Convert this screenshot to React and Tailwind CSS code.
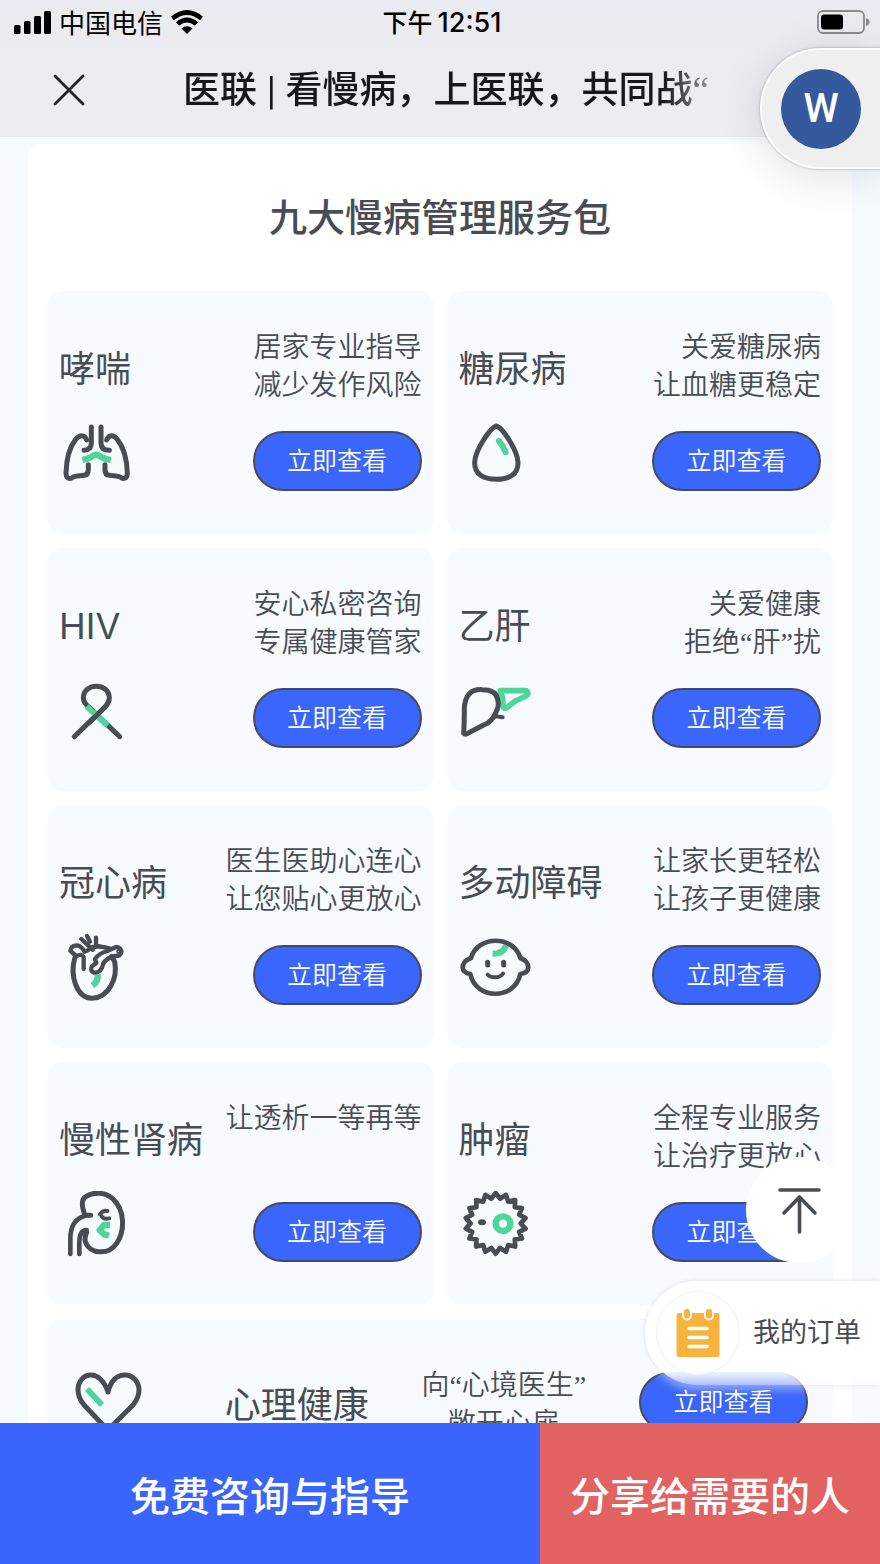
import React from "react";

const INK = "#484c54";
const GREEN = "#4fd49a";

function Icon({ viewBox, children }) {
  return (
    <svg
      viewBox={viewBox}
      className="size-[72px] shrink-0"
      fill="none"
      stroke={INK}
      strokeWidth="15"
      strokeLinecap="round"
      strokeLinejoin="round"
      aria-hidden="true"
    >
      {children}
    </svg>
  );
}

const LungsIcon = () => (
  <Icon viewBox="57 30 216 216">
    <path d="M154 51V100Q154 120 132 121" />
    <path d="M183 51V100Q184 121 208 121" />
    <path d="M140 90C134 72 118 74 107 88C88 112 79 150 78 190Q78 207 93 205Q100 199 112 198L132 196Q145 195 145 180V164" />
    <path d="M200 90C206 72 222 74 232 88C251 112 261 150 262 190Q262 207 247 205Q240 199 228 198L208 196Q195 195 195 180V164" />
    <path d="M127 150Q152 144 160 137Q169 131 178 137Q188 145 213 150" stroke={GREEN} strokeWidth="19" strokeLinecap="butt" />
  </Icon>
);

const DropIcon = () => (
  <Icon viewBox="26 30 216 216">
    <path d="M138 48C120 52 74 122 73 157C72 193 100 208 138 208C177 208 204 193 203 157C202 122 156 52 138 48Z" />
    <path d="M146 93Q158 107 166 127" stroke={GREEN} strokeWidth="18" />
  </Icon>
);

const RibbonIcon = () => (
  <Icon viewBox="57 21 216 216">
    <path d="M239 197L145 107Q130 94 130 80C132 34 206 34 208 80Q208 94 196 107L103 197" />
    <path d="M140 106L203 164" stroke={GREEN} strokeWidth="18" strokeLinecap="butt" />
    <path d="M196 107L150 153" />
  </Icon>
);

const LiverIcon = () => (
  <Icon viewBox="26 21 216 216">
    <path d="M150 62H228Q238 70 228 77Q210 86 195 93L169 113Q160 118 158 108L157 84Z" stroke={GREEN} strokeWidth="17" />
    <path d="M142 88Q138 59 96 59Q44 56 42 116Q42 160 40 190Q46 196 58 187L100 165Q128 153 136 128Q148 108 142 88Z" />
    <path d="M130 138L157 142" strokeWidth="12" />
  </Icon>
);

const HeartOrganIcon = () => (
  <Icon viewBox="57 27 216 216">
    <path d="M173 148Q176 169 157 182" stroke={GREEN} strokeWidth="19" strokeLinecap="butt" />
    <path d="M104 100C90 150 108 218 156 220C206 218 234 160 224 110L215 94" />
    <path d="M131 132V96Q124 84 109 94L91 77Q93 62 110 61Q124 62 134 80" strokeWidth="13" />
    <path d="M124 42L158 74M141 33L150 50M168 38V62L208 70Q184 62 158 66L140 78" strokeWidth="13" />
    <path d="M228 66Q246 68 244 82Q241 93 227 93Q200 96 189 118Q184 144 162 143Q149 138 156 124L169 114L165 102Q178 84 202 78L228 66Z" strokeWidth="13" />
    <circle cx="235" cy="79" r="4" strokeWidth="5" />
  </Icon>
);

const BabyIcon = () => (
  <Icon viewBox="26 27 216 216">
    <path d="M127 86Q160 87 167 60" stroke={GREEN} strokeWidth="18" strokeLinecap="butt" />
    <path d="M62 99C82 30 190 30 210 99Q234 108 234 128Q233 144 210 147C194 226 76 226 60 147Q38 144 37 128Q37 108 62 99Z" strokeWidth="14" />
    <path d="M112 112V120M160 112V120" strokeWidth="15" />
    <path d="M112 149Q118 157 135 157Q150 157 158 146" strokeWidth="12" />
  </Icon>
);

const KidneyIcon = () => (
  <Icon viewBox="57 33 216 216">
    <path d="M152 106H135Q118 60 137 50C162 34 198 36 220 58C254 90 256 152 230 190C204 228 150 220 138 190Q131 176 140 157" />
    <path d="M137 107Q91 118 91 176V222M118 222V188Q118 150 140 150" strokeWidth="14" />
    <path d="M202 93Q190 89 180 103M185 109Q192 119 208 115" strokeWidth="12" />
    <path d="M210 135H192L179 150L192 163L207 167" stroke={GREEN} strokeWidth="19" strokeLinecap="butt" />
  </Icon>
);

const SPIKES = 18;
const cellOutline =
  Array.from({ length: SPIKES * 2 }, (_, i) => {
    const radius = i % 2 === 0 ? 91 : 75;
    const angle = (Math.PI * i) / SPIKES - Math.PI / 2;
    const x = 136 + radius * Math.cos(angle);
    const y = 130 + radius * Math.sin(angle);
    return `${i ? "L" : "M"}${x.toFixed(1)} ${y.toFixed(1)}`;
  }).join("") + "Z";

const TumorIcon = () => (
  <Icon viewBox="26 33 216 216">
    <path d={cellOutline} strokeWidth="14" />
    <ellipse cx="95" cy="127" rx="12" ry="9" fill={INK} stroke="none" />
    <circle cx="158" cy="131" r="22" stroke={GREEN} strokeWidth="19" />
  </Icon>
);

const MindIcon = () => (
  <Icon viewBox="73 1366 72 72">
    <path
      d="M109 1392C105 1380 98 1375 92 1375C84 1375 79 1382 79 1390C79 1396 81 1400 85 1405L106 1427Q109 1430 112 1427L134 1405C138 1400 140 1396 140 1390C140 1382 134 1375 126 1375C118 1375 112 1380 109 1392Z"
      strokeWidth="5"
    />
    <path d="M88 1389L103 1405" stroke={GREEN} strokeWidth="6" strokeLinecap="butt" />
  </Icon>
);

const services = [
  { name: "哮喘", lines: ["居家专业指导", "减少发作风险"], icon: LungsIcon },
  { name: "糖尿病", lines: ["关爱糖尿病", "让血糖更稳定"], icon: DropIcon },
  { name: "HIV", lines: ["安心私密咨询", "专属健康管家"], icon: RibbonIcon },
  { name: "乙肝", lines: ["关爱健康", "拒绝“肝”扰"], icon: LiverIcon },
  { name: "冠心病", lines: ["医生医助心连心", "让您贴心更放心"], icon: HeartOrganIcon },
  { name: "多动障碍", lines: ["让家长更轻松", "让孩子更健康"], icon: BabyIcon },
  { name: "慢性肾病", lines: ["让透析一等再等"], icon: KidneyIcon },
  { name: "肿瘤", lines: ["全程专业服务", "让治疗更放心"], icon: TumorIcon },
];

/* Sets curly quotes and Latin runs in proportional faces inside Chinese text. */
function Mixed({ text }) {
  return text.split(/([“”]|[A-Za-z]+)/).map((part, i) => {
    if (/^[“”]$/.test(part)) {
      return (
        <span key={i} className="font-['Liberation_Serif',serif] leading-none">
          {part}
        </span>
      );
    }
    if (/^[A-Za-z]+$/.test(part)) {
      return (
        <span key={i} className="font-['Inter',sans-serif] leading-none">
          {part}
        </span>
      );
    }
    return part;
  });
}

function ViewButton({ name }) {
  return (
    <button
      type="button"
      aria-label={`立即查看 ${name}`}
      className="flex h-[60px] w-[169px] shrink-0 items-center justify-center rounded-full border-2 border-[#454a5e] bg-[#3a66fb] font-['Inter','Noto_Sans_CJK_SC',sans-serif] text-[25px] leading-[38px] font-[350] text-white"
    >
      立即查看
    </button>
  );
}

function ServiceCard({ name, lines, icon: Glyph }) {
  return (
    <li className="flex h-[243px] justify-between rounded-2xl bg-[#f7faff] px-3">
      <div className="pt-[55px]">
        <h3 className="text-[36px] leading-[40px] whitespace-nowrap">
          <Mixed text={name} />
        </h3>
        <div className="mt-[34px]">
          <Glyph />
        </div>
      </div>
      <div className="flex flex-col items-end pt-[35px]">
        <p className="mb-7 h-[77px] text-right text-[28px] leading-[38px] font-[350] whitespace-nowrap">
          {lines.map((line) => (
            <span key={line} className="block">
              <Mixed text={line} />
            </span>
          ))}
        </p>
        <ViewButton name={name} />
      </div>
    </li>
  );
}

function StatusBar() {
  return (
    <div className="grid h-11 grid-cols-3 items-center pr-[10px] pl-[14px] text-black">
      <div className="flex items-center gap-2">
        <svg viewBox="0 0 37 24" className="h-6 w-[37px]" fill="currentColor" aria-hidden="true">
          <rect x="0" y="15" width="6.500" height="9" rx="1.500" />
          <rect x="10" y="11" width="6.500" height="13" rx="1.500" />
          <rect x="20" y="6" width="7" height="18" rx="1.500" />
          <rect x="30" y="1" width="7" height="23" rx="1.500" />
        </svg>
        <span className="text-[26px] leading-[32px] whitespace-nowrap">中国电信</span>
        <svg viewBox="0 0 32 24" className="h-6 w-8" fill="none" stroke="currentColor" strokeWidth="4.600" aria-hidden="true">
          <path d="M1.500 8.500Q16 -3.500 30.500 8.500" />
          <path d="M6.500 14Q16 6 25.500 14" />
          <path d="M10.500 18.500Q16 14 21.500 18.500L16 24Z" fill="currentColor" stroke="none" />
        </svg>
      </div>
      <div className="flex items-baseline justify-center gap-[5px] font-medium">
        <span className="text-[25px] leading-[32px]">下午</span>
        <span className="font-['Inter',sans-serif] text-[27px] leading-[32px]">12:51</span>
      </div>
      <svg viewBox="0 0 53 24" className="h-6 w-[53px] justify-self-end" aria-hidden="true">
        <rect x="1" y="1" width="46" height="22" rx="5" fill="none" stroke="#8b8b8e" strokeWidth="1.800" />
        <rect x="4" y="4.500" width="22" height="15" rx="3" fill="#000" />
        <path d="M49 8Q52.500 9 52.500 12Q52.500 15 49 16Z" fill="#8b8b8e" />
      </svg>
    </div>
  );
}

export default function App() {
  return (
    <div className="relative flex h-screen flex-col overflow-hidden bg-[#f7faff] font-['Noto_Sans_CJK_SC',sans-serif] text-[#484c54]">
      <header className="shrink-0 border-b border-[#e4e6ea] bg-linear-to-b from-[#eaebf2] to-[#eeeeef]">
        <StatusBar />
        <div className="flex h-[92px] items-center pl-[53px]">
          <button type="button" aria-label="关闭" className="flex size-8 items-center justify-center">
            <svg viewBox="0 0 32 32" className="size-8" fill="none" stroke="#222" strokeWidth="2.800" strokeLinecap="round" aria-hidden="true">
              <path d="M2 2L30 30M30 2L2 30" />
            </svg>
          </button>
          <h1 className="ml-[98px] w-[550px] font-['Inter','Noto_Sans_CJK_SC',sans-serif] text-[37px] leading-[50px] font-medium whitespace-nowrap text-[#17181a] [mask-image:linear-gradient(to_right,black_480px,transparent_560px)]">
            医联<span className="mx-[2px] text-[28px] leading-none"> | </span>
            <Mixed text="看慢病，上医联，共同战“" />
          </h1>
        </div>
      </header>

      <main className="min-h-0 flex-1 overflow-y-auto px-7 pt-[7px] [scrollbar-width:none]">
        <section className="rounded-xl bg-white px-[19px] pt-12 pb-8">
          <h2 className="mb-[49px] text-center font-['Inter','Noto_Sans_CJK_SC',sans-serif] text-[38px] leading-[50px] font-medium">
            九大慢病管理服务包
          </h2>
          <ul className="grid grid-cols-2 gap-x-[13px] gap-y-[14px]">
            {services.map((service) => (
              <ServiceCard key={service.name} {...service} />
            ))}
          </ul>
          <div className="mt-[14px] flex h-[166px] items-center justify-between rounded-2xl bg-[#f7faff] px-[25px]">
            <MindIcon />
            <h3 className="ml-7 text-[36px] leading-[40px] whitespace-nowrap">心理健康</h3>
            <p className="text-center text-[28px] leading-[38px] font-[350] whitespace-nowrap">
              <span className="block">
                <Mixed text="向“心境医生”" />
              </span>
              <span className="block">敞开心扉</span>
            </p>
            <ViewButton name="心理健康" />
          </div>
        </section>
      </main>

      <footer className="grid h-[141px] shrink-0 grid-cols-[27fr_17fr] text-[40px] leading-[56px] font-medium text-white">
        <button type="button" className="bg-[#3a65fc] whitespace-nowrap">
          免费咨询与指导
        </button>
        <button type="button" className="bg-[#e26262] whitespace-nowrap">
          分享给需要的人
        </button>
      </footer>

      <button
        type="button"
        aria-label="W 文档"
        className="absolute top-12 right-0 flex h-[121px] w-[120px] items-center rounded-l-full border-2 border-r-0 border-white bg-[#efeff0] pl-[19px] shadow-[0_0_2px_1px_rgba(0,0,0,0.16),0_8px_48px_rgba(0,0,0,0.12)]"
      >
        <span className="flex size-20 items-center justify-center rounded-full bg-[#34599c] font-['Roboto',sans-serif] text-[40px] leading-[44px] font-medium text-white">
          W
        </span>
      </button>

      <button
        type="button"
        aria-label="返回顶部"
        className="absolute right-[28px] bottom-[301px] flex size-[106px] items-center justify-center rounded-full bg-white"
      >
        <svg viewBox="0 0 46 48" className="h-12 w-[46px]" fill="none" stroke={INK} strokeWidth="3.600" strokeLinecap="round" strokeLinejoin="round" aria-hidden="true">
          <path d="M4 4H43M23.500 11V46M8 27L23.500 11L39 27" />
        </svg>
      </button>

      <a
        href="#orders"
        className="absolute right-0 bottom-[179px] flex h-[104px] w-[235px] items-center gap-[13px] rounded-l-full bg-linear-to-b from-white from-85% to-white/60 pl-[11px] shadow-[0_0_5px_rgba(60,70,100,0.16),0_4px_8px_rgba(255,255,255,0.5)]"
      >
        <span className="flex size-[84px] shrink-0 items-center justify-center rounded-full border border-[#f1f1f3] bg-white">
          <svg viewBox="0 0 44 50" className="h-[50px] w-11" aria-hidden="true">
            <rect x="0.500" y="5" width="43" height="44" rx="2" fill="#f6b43e" />
            <g fill="#f6b43e" stroke="#fff" strokeWidth="1.800">
              <rect x="7" y="0" width="8" height="11.500" rx="4" />
              <rect x="29" y="0" width="8" height="11.500" rx="4" />
            </g>
            <path d="M13 20.500H31M13 29.500H31M13 38.500H31" stroke="#fff" strokeWidth="3.600" strokeLinecap="round" />
          </svg>
        </span>
        <span className="font-['Inter','Noto_Sans_CJK_SC',sans-serif] text-[27px] leading-[38px] whitespace-nowrap">我的订单</span>
      </a>
    </div>
  );
}
